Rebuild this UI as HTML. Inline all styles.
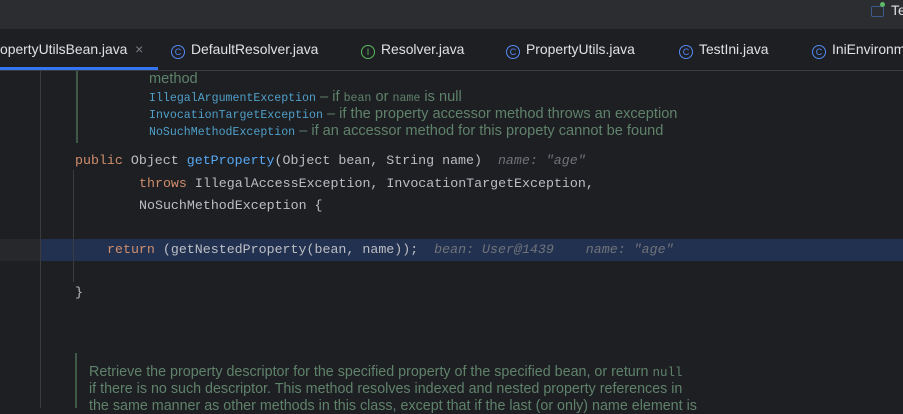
<!DOCTYPE html><html><head><style>
body{margin:0;width:903px;height:408px;overflow:hidden;background:#1e1f22;position:relative;font-family:"Liberation Sans",sans-serif}
.a{position:absolute;white-space:pre}
.m{font-family:"Liberation Mono",monospace;font-size:13.3px;color:#bcbec4}
.d{font-size:14.6px;color:#5f826b}
.d2{font-size:14.3px;color:#5f826b}
.l{font-family:"Liberation Mono",monospace;color:#4f9fc9;font-size:11.6px}
.k{color:#cf8e6d}.f{color:#56a8f5}.h{color:#6f737a;font-style:italic}
.t{font-size:13.9px;color:#dfe1e5}
.ic{display:inline-block;width:12px;height:12px;border:1.5px solid #548af7;border-radius:50%;color:#548af7;font-size:9px;text-align:center;line-height:12px;vertical-align:-1px;margin-right:6px}
</style></head><body>
<div class="a" style="left:0;top:0;width:903px;height:29px;background:#2b2d30"></div>
<div class="a" style="left:871px;top:6px;width:11px;height:9px;border:1.5px solid #3d5a8a;border-radius:2px"></div>
<div class="a" style="left:880px;top:2px;width:5px;height:5px;background:#5fb865;border-radius:50%"></div>
<div class="a t" style="left:891px;top:2px">Te</div>
<div class="a" style="left:0;top:70px;width:903px;height:1px;background:#393b40"></div>
<div class="a" style="left:0;top:67px;width:158px;height:3px;background:#3574f0"></div>
<div class="a t" style="left:0;top:41px">opertyUtilsBean.java  <span style="color:#7a7e85">×</span></div>
<div class="a t" style="left:171px;top:41px"><span class="ic">C</span>DefaultResolver.java</div>
<div class="a t" style="left:361px;top:41px"><span class="ic" style="border-color:#5fb865;color:#5fb865">I</span>Resolver.java</div>
<div class="a t" style="left:506px;top:41px"><span class="ic">C</span>PropertyUtils.java</div>
<div class="a t" style="left:679px;top:41px"><span class="ic">C</span>TestIni.java</div>
<div class="a t" style="left:812px;top:41px"><span class="ic">C</span>IniEnvironm</div>
<div class="a" style="left:40px;top:71px;width:1px;height:337px;background:#393b40"></div>
<div class="a" style="left:76px;top:71px;width:2px;height:72px;background:#3f5a46"></div>
<div class="a" style="left:0;top:239px;width:40px;height:22px;background:#26282b"></div>
<div class="a" style="left:41px;top:239px;width:862px;height:22px;background:#233150"></div>
<div class="a" style="left:73px;top:170px;width:1px;height:112px;background:#393b40"></div>
<div class="a" style="left:75px;top:353px;width:2px;height:55px;background:#3f5a46"></div>
<div class="a d" style="left:149px;top:71px">method</div>
<div class="a d" style="left:149px;top:89px"><span class="l">IllegalArgumentException</span> – if <span class="l" style="color:#5f826b">bean</span> or <span class="l" style="color:#5f826b">name</span> is null</div>
<div class="a d" style="left:149px;top:106px"><span class="l">InvocationTargetException</span> – if the property accessor method throws an exception</div>
<div class="a d" style="left:149px;top:123px"><span class="l">NoSuchMethodException</span> – if an accessor method for this propety cannot be found</div>
<div class="a m" style="left:75px;top:153px"><span class="k">public</span> Object <span class="f">getProperty</span>(Object bean, String name)  <span class="h">name: "age"</span></div>
<div class="a m" style="left:139px;top:176px"><span class="k">throws</span> IllegalAccessException, InvocationTargetException,</div>
<div class="a m" style="left:139px;top:198px">NoSuchMethodException {</div>
<div class="a m" style="left:107px;top:242px"><span class="k">return</span> (getNestedProperty(bean, name));  <span class="h">bean: User@1439    name: "age"</span></div>
<div class="a m" style="left:75px;top:285px">}</div>
<div class="a d2" style="left:89px;top:364px">Retrieve the property descriptor for the specified property of the specified bean, or return <span class="l" style="color:#5f826b;font-size:12.5px">null</span></div>
<div class="a d2" style="left:89px;top:381px">if there is no such descriptor. This method resolves indexed and nested property references in</div>
<div class="a d2" style="left:89px;top:398px">the same manner as other methods in this class, except that if the last (or only) name element is</div>
</body></html>
